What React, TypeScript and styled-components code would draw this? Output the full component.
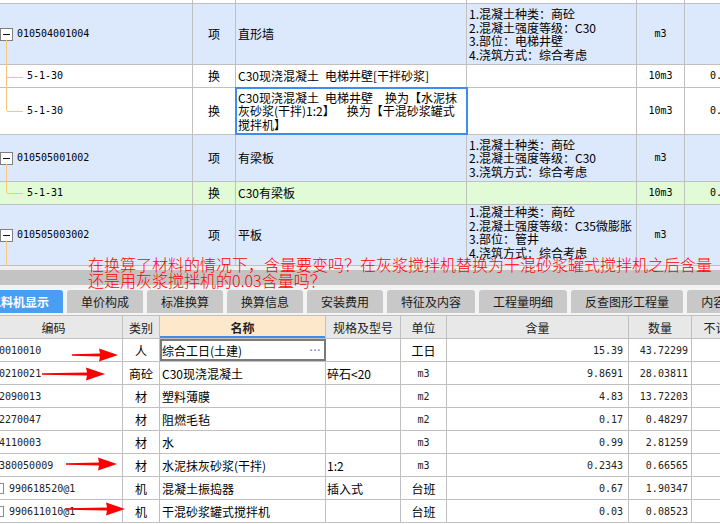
import React from "react";
import styled, { createGlobalStyle } from "styled-components";

const GlobalStyle = createGlobalStyle`
  html, body {
    margin: 0;
    padding: 0;
    background: #ffffff;
  }
  body {
    width: 720px;
    height: 524px;
    overflow: hidden;
    font-family: "Noto Sans CJK SC", "Noto Sans", sans-serif;
    font-size: 12px;
    color: #000;
  }
`;

const tones = {
  item: "#dce8fc",
  sub: "#ffffff",
  hl: "#e0fbd6",
  blank: "#ffffff",
};

type Tone = keyof typeof tones;

const Screen = styled.div`
  position: relative;
  width: 720px;
  height: 524px;
  overflow: hidden;
  display: flex;
  flex-direction: column;
`;

const TopGrid = styled.div`
  flex: none;
  height: 266px;
  overflow: hidden;
`;

const TopRow = styled.div<{ $h: number; $tone: Tone }>`
  display: grid;
  grid-template-columns: 193px 43px 231px 170px 48px 1fr;
  height: ${(p) => p.$h}px;
  box-sizing: border-box;
  border-bottom: 1px solid #c0c0c0;
  background: ${(p) => tones[p.$tone]};
`;

const Cell = styled.div<{ $center?: boolean }>`
  position: relative;
  display: flex;
  align-items: center;
  justify-content: ${(p) => (p.$center ? "center" : "flex-start")};
  padding: 0 2px;
  border-right: 1px solid #c0c0c0;
  white-space: pre;
  line-height: 13.5px;
  min-width: 0;
`;

const CodeCell = styled(Cell)<{ $indent: number }>`
  padding-left: ${(p) => p.$indent}px;
`;

const QtyCell = styled(Cell)`
  padding-left: 25px;
  border-right: none;
`;

const EditCell = styled(Cell)`
  outline: 2px solid #3a8ef0;
  outline-offset: -1px;
`;

const FeatCell = styled(Cell)<{ $top?: boolean }>`
  align-items: ${(p) => (p.$top ? "flex-start" : "center")};
`;

const Lines = styled.div`
  display: flex;
  flex-direction: column;
`;

const Mono = styled.span`
  font-family: "DejaVu Sans Mono", "Liberation Mono", monospace;
  font-size: 10px;
`;

const Toggle = styled.span`
  position: relative;
  flex: none;
  width: 13px;
  height: 13px;
  box-sizing: border-box;
  border: 1px solid #808080;
  background: #fff;
  margin-right: 4px;
  &::after {
    content: "";
    position: absolute;
    left: 2px;
    top: 5px;
    width: 7px;
    height: 1px;
    background: #111;
  }
`;

const treeColor = "#f7c57c";

const Stem = styled.span`
  position: absolute;
  left: 6px;
  top: calc(50% + 6px);
  bottom: -1px;
  border-left: 1px solid ${treeColor};
`;

const Branch = styled.span<{ $last?: boolean }>`
  position: absolute;
  left: 6px;
  top: -1px;
  bottom: ${(p) => (p.$last ? "50%" : "-1px")};
  border-left: 1px solid ${treeColor};
  &::after {
    content: "";
    position: absolute;
    left: 0;
    top: ${(p) => (p.$last ? "100%" : "calc(50% + 0.5px)")};
    width: 16px;
    border-top: 1px solid ${treeColor};
  }
`;

const Splitter = styled.div`
  flex: none;
  height: 22px;
  background: linear-gradient(#eeeeee 0 4px, #c3c3c3 4px 19px, #f2f2f2 19px);
`;

const TabBar = styled.div`
  flex: none;
  height: 28px;
  box-sizing: border-box;
  padding-top: 2px;
  display: flex;
  gap: 4px;
  background: #f4f4f4;
  border-bottom: 1px solid #c0c0c0;
  overflow: hidden;
`;

const Tab = styled.div<{ $active?: boolean }>`
  flex: none;
  height: 23px;
  padding: 0 14px;
  display: flex;
  align-items: center;
  white-space: nowrap;
  border-radius: 3px 3px 0 0;
  background: ${(p) => (p.$active ? "#4a9ef2" : "#c8c8c8")};
  color: ${(p) => (p.$active ? "#ffffff" : "#1a1a1a")};
  font-weight: ${(p) => (p.$active ? 700 : 400)};
  &:first-child {
    margin-left: -25px;
  }
`;

const BottomGrid = styled.div`
  flex: none;
  margin-left: -15px;
`;

const BRow = styled.div<{ $head?: boolean }>`
  display: grid;
  grid-template-columns: 138px 37px 166px 75px 46px 182px 63px 60px;
  height: 23px;
  box-sizing: border-box;
  border-bottom: 1px solid #c0c0c0;
  background: ${(p) => (p.$head ? "#e8e8e8" : "#ffffff")};
`;

const BCell = styled.div<{ $align?: "left" | "center" | "right"; $pad?: number }>`
  position: relative;
  display: flex;
  align-items: center;
  justify-content: ${(p) =>
    p.$align === "center" ? "center" : p.$align === "right" ? "flex-end" : "flex-start"};
  padding: 0 ${(p) => p.$pad ?? 2}px;
  border-right: 1px solid #c0c0c0;
  white-space: nowrap;
  min-width: 0;
  overflow: hidden;
`;

const CodeBCell = styled(BCell)<{ $check?: boolean }>`
  padding-left: ${(p) => (p.$check ? 0 : 8)}px;
`;

const HeadCell = styled(BCell)<{ $active?: boolean }>`
  color: #222;
  background: ${(p) => (p.$active ? "#fde8cc" : "transparent")};
  font-weight: ${(p) => (p.$active ? 700 : 400)};
  box-shadow: ${(p) => (p.$active ? "inset 0 -2px 0 #3d8ee8" : "none")};
`;

const SelCell = styled(BCell)`
  outline: 2px solid #7b7b7b;
  outline-offset: -2px;
  justify-content: space-between;
  padding-right: 5px;
`;

const Dots = styled.span`
  color: #4b8fd6;
  font-family: "DejaVu Sans Mono", monospace;
  font-weight: 700;
  font-size: 9px;
  letter-spacing: -1.5px;
`;

const Check = styled.span`
  flex: none;
  width: 11px;
  height: 11px;
  box-sizing: border-box;
  border: 1px solid #8a8a8a;
  background: #fff;
  margin: 0 5px 0 8px;
`;

const Num = styled.span`
  font-family: "DejaVu Sans Mono", "Liberation Mono", monospace;
  font-size: 10px;
  color: #222;
`;

const Note = styled.div`
  position: absolute;
  left: 88px;
  top: 256px;
  color: #ff0000;
  font-size: 16px;
  line-height: 16px;
  font-weight: 300;
  white-space: nowrap;
`;

const ArrowSvg = styled.svg<{ $x: number; $y: number }>`
  position: absolute;
  left: ${(p) => p.$x}px;
  top: ${(p) => p.$y - 7}px;
`;

function Arrow({ x, y, len }: { x: number; y: number; len: number }) {
  const h = 18;
  return (
    <ArrowSvg $x={x} $y={y} width={len} height={14} viewBox={`0 0 ${len} 14`}>
      <polygon
        points={`0,6.2 ${len - h},5.4 ${len - h - 1},0.5 ${len},7 ${len - h - 1},13.5 ${len - h},8.6 0,7.8`}
        fill="#ff0000"
      />
    </ArrowSvg>
  );
}

type TopData = {
  tone: Tone;
  h: number;
  code?: string;
  tree?: "parent" | "mid" | "last";
  type?: string;
  name?: string[];
  edit?: boolean;
  feats?: string[];
  featTop?: boolean;
  unit?: string;
  qty?: string;
};

const topRows: TopData[] = [
  { tone: "blank", h: 4 },
  {
    tone: "item",
    h: 61,
    code: "010504001004",
    tree: "parent",
    type: "项",
    name: ["直形墙"],
    feats: ["1.混凝土种类：商砼", "2.混凝土强度等级：C30", "3.部位：电梯井壁", "4.浇筑方式：综合考虑"],
    unit: "m3",
  },
  {
    tone: "sub",
    h: 23,
    code: "5-1-30",
    tree: "mid",
    type: "换",
    name: ["C30现浇混凝土\u2002电梯井壁[干拌砂浆]"],
    unit: "10m3",
    qty: "0.28424",
  },
  {
    tone: "sub",
    h: 47,
    code: "5-1-30",
    tree: "last",
    type: "换",
    edit: true,
    name: [
      "C30现浇混凝土\u2002电梯井壁\u2002\u2002换为【水泥抹",
      "灰砂浆(干拌)1:2】\u2002\u2002换为【干混砂浆罐式",
      "搅拌机】",
    ],
    unit: "10m3",
    qty: "0.28424",
  },
  {
    tone: "item",
    h: 47,
    code: "010505001002",
    tree: "parent",
    type: "项",
    name: ["有梁板"],
    feats: ["1.混凝土种类：商砼", "2.混凝土强度等级：C30", "3.浇筑方式：综合考虑"],
    unit: "m3",
  },
  {
    tone: "hl",
    h: 23,
    code: "5-1-31",
    tree: "last",
    type: "换",
    name: ["C30有梁板"],
    unit: "10m3",
    qty: "0.57312",
  },
  {
    tone: "item",
    h: 61,
    code: "010505003002",
    tree: "parent",
    type: "项",
    name: ["平板"],
    feats: ["1.混凝土种类：商砼", "2.混凝土强度等级：C35微膨胀", "3.部位：管井", "4.浇筑方式：综合考虑"],
    featTop: true,
    unit: "m3",
  },
];

const tabs = ["工料机显示", "单价构成", "标准换算", "换算信息", "安装费用", "特征及内容", "工程量明细", "反查图形工程量", "内容指引"];

type BotData = {
  code: string;
  check?: boolean;
  type: string;
  name: string;
  spec: string;
  unit: string;
  cjkUnit?: boolean;
  amount: string;
  total: string;
  selected?: boolean;
};

const botRows: BotData[] = [
  { code: "00010010", type: "人", name: "综合工日(土建)", spec: "", unit: "工日", cjkUnit: true, amount: "15.39", total: "43.72299", selected: true },
  { code: "80210021", type: "商砼", name: "C30现浇混凝土", spec: "碎石<20", unit: "m3", amount: "9.8691", total: "28.03811" },
  { code: "02090013", type: "材", name: "塑料薄膜", spec: "", unit: "m2", amount: "4.83", total: "13.72203" },
  { code: "02270047", type: "材", name: "阻燃毛毡", spec: "", unit: "m2", amount: "0.17", total: "0.48297" },
  { code: "34110003", type: "材", name: "水", spec: "", unit: "m3", amount: "0.99", total: "2.81259" },
  { code: "0380050009", type: "材", name: "水泥抹灰砂浆(干拌)", spec: "1:2", unit: "m3", amount: "0.2343", total: "0.66565" },
  { code: "990618520@1", check: true, type: "机", name: "混凝土振捣器", spec: "插入式", unit: "台班", cjkUnit: true, amount: "0.67", total: "1.90347" },
  { code: "990611010@1", check: true, type: "机", name: "干混砂浆罐式搅拌机", spec: "", unit: "台班", cjkUnit: true, amount: "0.03", total: "0.08523" },
];

const arrows = [
  { x: 72, y: 355, len: 46 },
  { x: 42, y: 374, len: 63 },
  { x: 66, y: 463.5, len: 51 },
  { x: 65, y: 508.5, len: 60 },
];

function TopTableRow({ r }: { r: TopData }) {
  const NameCell = r.edit ? EditCell : Cell;
  return (
    <TopRow $h={r.h} $tone={r.tone}>
      <CodeCell $indent={r.tree === "parent" ? 0 : 27}>
        {r.tree === "parent" && <Toggle />}
        {r.tree === "parent" && <Stem />}
        {(r.tree === "mid" || r.tree === "last") && <Branch $last={r.tree === "last"} />}
        {r.code && <Mono>{r.code}</Mono>}
      </CodeCell>
      <Cell $center>{r.type}</Cell>
      <NameCell>
        {r.name && (
          <Lines>
            {r.name.map((l, i) => (
              <span key={i}>{l}</span>
            ))}
          </Lines>
        )}
      </NameCell>
      <FeatCell $top={r.featTop}>
        {r.feats && (
          <Lines>
            {r.feats.map((f, i) => (
              <span key={i}>{f}</span>
            ))}
          </Lines>
        )}
      </FeatCell>
      <Cell $center>{r.unit && <Mono>{r.unit}</Mono>}</Cell>
      <QtyCell>{r.qty && <Mono>{r.qty}</Mono>}</QtyCell>
    </TopRow>
  );
}

export default function App() {
  return (
    <Screen>
      <GlobalStyle />
      <TopGrid>
        {topRows.map((r, i) => (
          <TopTableRow key={i} r={r} />
        ))}
      </TopGrid>
      <Splitter />
      <TabBar>
        {tabs.map((t, i) => (
          <Tab key={t} $active={i === 0}>
            {t}
          </Tab>
        ))}
      </TabBar>
      <BottomGrid>
        <BRow $head>
          <HeadCell $align="center">编码</HeadCell>
          <HeadCell $align="center">类别</HeadCell>
          <HeadCell $align="center" $active>
            名称
          </HeadCell>
          <HeadCell $align="center">规格及型号</HeadCell>
          <HeadCell $align="center">单位</HeadCell>
          <HeadCell $align="center">含量</HeadCell>
          <HeadCell $align="center">数量</HeadCell>
          <HeadCell $align="center">不计价</HeadCell>
        </BRow>
        {botRows.map((r) => {
          const NameCell = r.selected ? SelCell : BCell;
          return (
            <BRow key={r.code}>
              <CodeBCell $check={r.check}>
                {r.check && <Check />}
                <Num>{r.code}</Num>
              </CodeBCell>
              <BCell $align="center">{r.type}</BCell>
              <NameCell>
                <span>{r.name}</span>
                {r.selected && <Dots>···</Dots>}
              </NameCell>
              <BCell $pad={1}>{r.spec}</BCell>
              <BCell $align="center">{r.cjkUnit ? r.unit : <Num>{r.unit}</Num>}</BCell>
              <BCell $align="right" $pad={5}>
                <Num>{r.amount}</Num>
              </BCell>
              <BCell $align="right" $pad={3}>
                <Num>{r.total}</Num>
              </BCell>
              <BCell />
            </BRow>
          );
        })}
      </BottomGrid>
      <Note>
        在换算了材料的情况下，含量要变吗？在灰浆搅拌机替换为干混砂浆罐式搅拌机之后含量
        <br />
        还是用灰浆搅拌机的0.03含量吗？
      </Note>
      {arrows.map((a, i) => (
        <Arrow key={i} x={a.x} y={a.y} len={a.len} />
      ))}
    </Screen>
  );
}
